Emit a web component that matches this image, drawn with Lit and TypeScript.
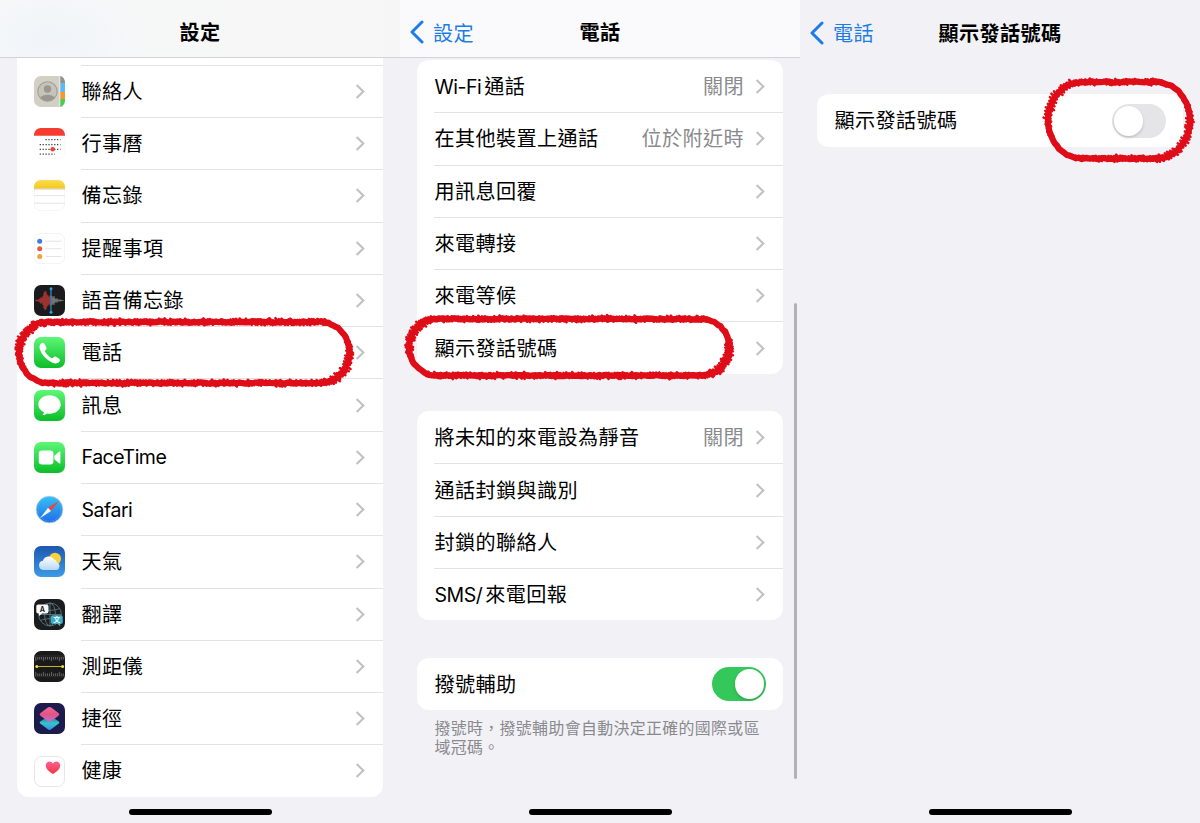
import { LitElement, html, svg, css, nothing } from "lit";
import { customElement, property } from "lit/decorators.js";

const FONT = css`Inter, "Noto Sans CJK TC", sans-serif`;

/* Splits a label into Latin and CJK runs so that each gets its own tracking. */
const runs = (text: string) =>
  text.split(/([\x21-\x7e]+)/).filter(Boolean).map((part) =>
    /^[\x21-\x7e]/.test(part)
      ? html`<span class="latin">${part}</span>`
      : html`<span class="han">${part}</span>`);

const textStyles = css`
  .latin { font-family: Inter, sans-serif; font-size: 19.5px; letter-spacing: -0.5px; }
  .han { font-family: "Noto Sans CJK TC", sans-serif; letter-spacing: 0.4px; }
  .latin + .han { margin-left: 3px; }
`;

const ticks = (y: number, dir: number) =>
  Array.from({ length: 15 }, (_, i) => svg`<path d="M${1.8 + i * 1.96} ${y}v${dir * (i % 4 === 0 ? 4.2 : 2.6)}"/>`);

const wave = (x0: number, heights: number[]) =>
  heights.map((h, i) => svg`<path d="M${x0 + i} ${15.5 - h}v${h * 2}"/>`);

const icons: Record<string, unknown> = {
  contacts: svg`
    <rect width="31" height="31" rx="7" fill="#d2d0c5"/>
    <path d="M26 0c3 .6 5 3.4 5 7v0h-5z" fill="#8e938f"/>
    <path d="M26 7h5v9h-5z" fill="#5fb8ee"/>
    <path d="M26 16h5v7h-5z" fill="#f29a2e"/>
    <path d="M26 23h5v1c0 3.600-2 6.400-5 7z" fill="#4bc95b"/>
    <path d="M25.800 0v31" stroke="#eceae2" stroke-width="1"/>
    <circle cx="13.500" cy="15.500" r="9.700" fill="#c6c4ba" stroke="#a09e96" stroke-width="1.100"/>
    <circle cx="13.500" cy="13" r="3.700" fill="#99978f"/>
    <path d="M6.300 21.200c2.800-3.400 11.600-3.400 14.400 0-3 4.900-11.400 4.900-14.400 0z" fill="#99978f"/>`,
  calendar: svg`
    <rect x=".25" y=".25" width="30.500" height="30.500" rx="7" fill="#fff" stroke="#f0f0f0" stroke-width=".5"/>
    <path d="M0 7.800C0 3 3 0 7 0h17c4 0 7 3 7 7.800z" fill="#f63b30"/>
    <g stroke="#333" stroke-width="1.200" stroke-dasharray="1.200 1.700">
      <path d="M11.500 11.600h15"/><path d="M5.700 16.600h20.800"/><path d="M5.700 21.300h20.800"/><path d="M5.700 26.200h15"/>
    </g>
    <circle cx="18.700" cy="21.200" r="2.300" fill="#e8403a"/>`,
  notes: svg`
    <rect x=".25" y=".25" width="30.500" height="30.500" rx="7" fill="#fff" stroke="#ececec" stroke-width=".6"/>
    <path d="M0 8.500V7c0-4 3-7 7-7h17c4 0 7 3 7 7v1.500z" fill="url(#notes)"/>
    <path d="M0 9h31" stroke="#cbb986" stroke-width=".8"/>
    <path d="M0 15.600h31M0 23.200h31" stroke="#dededf" stroke-width=".8"/>`,
  reminders: svg`
    <rect x=".25" y=".25" width="30.500" height="30.500" rx="7" fill="#fff" stroke="#e9e9ea" stroke-width=".6"/>
    <path d="M11.500 8.200h16M11.500 15.700h16M11.500 23.500h16" stroke="#dcdcde" stroke-width=".8"/>
    <circle cx="5.700" cy="8.200" r="2.500" fill="#3f7ae0"/>
    <circle cx="5.700" cy="15.700" r="2.500" fill="#df5b48"/>
    <circle cx="5.700" cy="23.500" r="2.500" fill="#f2a13e"/>`,
  memos: svg`
    <rect width="31" height="31" rx="7" fill="#1b1b1d"/>
    <g stroke="#c93c38" stroke-width="1">${wave(2, [0.6, 0.9, 0.7, 1.2, 2, 3.2, 2.4, 4.5, 7.5, 9.5, 8.8, 6, 5, 3.6, 5])}</g>
    <g stroke="#9a9a9c" stroke-width=".9">${wave(18, [4.5, 3, 4.4, 2.2, 1.4, 2.2, 1, 0.7, 1, 0.7, 0.5, 0.4])}</g>
    <path d="M17 3.500v24" stroke="#2f9fe0" stroke-width="1.100"/>
    <circle cx="17" cy="3.800" r="1.500" fill="#2f9fe0"/><circle cx="17" cy="27.200" r="1.500" fill="#2f9fe0"/>`,
  phone: svg`
    <rect width="31" height="31" rx="7" fill="url(#green)"/>
    <path d="M7.100 6.500c1.300-1 2.600-.9 3.500.4l1.600 3c.6 1.100.4 2-.4 2.800-.9.800-1 1.400-.5 2.300 1.400 2.400 3.500 4.500 5.900 5.900.9.500 1.500.3 2.200-.5.800-.9 1.700-1.100 2.800-.5l2.700 1.600c1.300.9 1.400 2.100.4 3.300-1.700 1.900-4.300 2.100-7.300.600C12.100 22.400 8.100 18.200 6.100 12.900 5.100 10.300 5.300 7.900 7.100 6.500z" fill="#fff"/>`,
  messages: svg`
    <rect width="31" height="31" rx="7" fill="url(#green)"/>
    <path d="M15.500 5.200c6.300 0 11.200 4.100 11.200 9.300s-4.900 9.300-11.200 9.300c-.9 0-1.700-.1-2.500-.2-1.300 1-2.900 1.700-4.700 1.700.9-.9 1.500-1.800 1.600-3-3.400-1.600-5.600-4.500-5.600-7.800 0-5.200 4.900-9.300 11.200-9.300z" fill="#fff"/>`,
  facetime: svg`
    <rect width="31" height="31" rx="7" fill="url(#green)"/>
    <rect x="4.800" y="8.600" width="14.600" height="13.800" rx="3.200" fill="#fff"/>
    <path d="M20.300 13.700l4.700-4c.7-.5 1.400-.3 1.400.6v10.400c0 .9-.7 1.100-1.400.6l-4.700-4z" fill="#fff"/>`,
  safari: svg`
    <circle cx="15.500" cy="15.500" r="13.400" fill="url(#blue)" stroke="#d4dde5" stroke-width=".7"/>
    <circle cx="15.500" cy="15.500" r="11.600" fill="none" stroke="#6fbdf5" stroke-width=".9" stroke-dasharray=".5 1.200"/>
    <path d="M25 6.800L14 13.800l3 3.200z" fill="#e8483f"/>
    <path d="M6 24.300L14 13.800l3 3.200z" fill="#f2f5f8"/>`,
  weather: svg`
    <rect width="31" height="31" rx="7" fill="url(#sky)"/>
    <circle cx="21" cy="12.700" r="6" fill="#fbd13e"/>
    <path d="M9.300 24A4.700 4.700 0 0 1 8.900 14.700 6.300 6.300 0 0 1 20 13.200 4.500 4.500 0 0 1 22.800 16.600 3.800 3.800 0 0 1 22 24z" fill="url(#cloud)"/>`,
  translate: svg`
    <rect width="31" height="31" rx="7" fill="#1a1c1e"/>
    <g fill="none" stroke="#5d767f" stroke-width=".9">
      <circle cx="16" cy="15.500" r="11.400"/><ellipse cx="16" cy="15.500" rx="5.400" ry="11.400"/>
      <path d="M16 4v23M4.600 15.500h22.800M6.500 9.500c5 2.400 14 2.400 19 0M6.500 21.500c5-2.400 14-2.400 19 0"/>
    </g>
    <path d="M4.300 5.400h8.200c1.200 0 2 .8 2 2v5c0 1.200-.8 2-2 2H8l-3 2.500v-2.500h-.7c-1.200 0-2-.8-2-2v-5c0-1.200.8-2 2-2z" fill="#fafafa"/>
    <path d="M18.800 16.300h8c1.200 0 2 .8 2 2V23c0 1.200-.8 2-2 2h-.6v2.500L23.500 25h-4.700c-1.200 0-2-.8-2-2v-4.700c0-1.200.8-2 2-2z" fill="#3cacc7"/>
    <text x="8.300" y="12.500" font-family="Inter, sans-serif" font-size="7" font-weight="700" fill="#222" text-anchor="middle">A</text>
    <text x="22.700" y="23.400" font-family="Noto Sans CJK TC, sans-serif" font-size="7" font-weight="700" fill="#fff" text-anchor="middle">文</text>`,
  measure: svg`
    <rect width="31" height="31" rx="7" fill="#1a1a1b"/>
    <path d="M0 5h31M0 25.700h31" stroke="#39393a" stroke-width=".6"/>
    <g stroke="#a3a3a3" stroke-width=".55">${ticks(6, 1)}${ticks(25, -1)}</g>
    <path d="M2.500 15.500h26" stroke="#c4b32c" stroke-width="1"/>
    <circle cx="2.800" cy="15.500" r="1.500" fill="#f5df35"/><circle cx="28.600" cy="15.500" r="1.500" fill="#f5df35"/>`,
  shortcuts: svg`
    <rect width="31" height="31" rx="7" fill="#1b1b4e"/>
    <path d="M14 13.400L6.500 18.200c-1.100.8-1.100 1.700 0 2.500l7.300 5.600c1.100.8 2.300.8 3.400 0l7.300-5.600c1.100-.8 1.100-1.700 0-2.500l-7-4.800z" fill="url(#teal)"/>
    <path d="M13.800 4.500L6.500 10c-1.100.8-1.100 1.800 0 2.700l7.300 5.500c1.100.8 2.300.8 3.400 0l7.300-5.500c1.100-.9 1.100-1.900 0-2.700l-7.300-5.500c-1.100-.8-2.300-.8-3.400 0z" fill="url(#pink)"/>`,
  health: svg`
    <rect x=".5" y=".5" width="30" height="30" rx="7" fill="#fff" stroke="#e6e6e8" stroke-width="1"/>
    <path d="M19 18.100c-4.300-2.700-7.200-5.300-7.200-8.500C11.800 7.200 13.400 5.500 15.500 5.500c1.500 0 2.800.8 3.500 2 .7-1.200 2-2 3.500-2 2.100 0 3.700 1.700 3.700 4.100 0 3.200-2.900 5.800-7.200 8.500z" fill="url(#heart)"/>`,
};

const grad = (id: string, ...stops: string[]) => svg`
  <linearGradient id=${id} x1="0" y1="0" x2="0" y2="1">
    ${stops.map((c, i) => svg`<stop offset=${i / (stops.length - 1)} stop-color=${c}/>`)}
  </linearGradient>`;

@customElement("app-icon")
class AppIcon extends LitElement {
  @property() name = "";
  static styles = css`:host, svg { display: block; width: 31px; height: 31px; }`;
  render() {
    return html`<svg viewBox="0 0 31 31">
      <defs>
        ${grad("green", "#5df777", "#0bbd29")}
        ${grad("blue", "#35c1f3", "#1f6ce8")}
        ${grad("sky", "#1d57b0", "#3c9be6")}
        ${grad("cloud", "#ffffff", "#b9d8f4")}
        ${grad("notes", "#f9dc4e", "#f5c822")}
        ${grad("teal", "#176c9c", "#35c6c4", "#3a8eee")}
        ${grad("pink", "#f06a9b", "#e4537f", "#b771d8")}
        ${grad("heart", "#fb5f94", "#f2363f")}
      </defs>
      ${icons[this.name]}
    </svg>`;
  }
}

@customElement("list-row")
class ListRow extends LitElement {
  @property() label = "";
  @property() value = "";
  @property() icon = "";
  @property() toggle = "";
  @property({ type: Boolean }) first = false;
  static styles = [textStyles, css`
    :host { display: flex; height: 52.29px; padding-left: 17px; box-sizing: border-box; }
    app-icon { align-self: center; margin: 1.200px 16px 0 0; }
    .body {
      flex: 1; display: flex; align-items: center; justify-content: space-between;
      border-top: 1px solid #e3e3e5; padding-right: 17px; box-sizing: border-box;
      font: 400 20.1px/30px ${FONT}; color: #000; white-space: nowrap;
    }
    .body.first { border-top-color: transparent; }
    .label { margin-left: .3px; }
    .end { display: flex; align-items: center; gap: 10.800px; color: #8a8a8e; }
    .chevron { display: block; width: 10px; height: 15px; margin-right: 1.200px; }
    .switch { width: 54.500px; height: 33.500px; border-radius: 17px; background: #e5e5e7; display: flex; padding: 2px; box-sizing: border-box; }
    .switch.on { background: #34c759; justify-content: flex-end; }
    .knob { width: 29.500px; height: 29.500px; border-radius: 50%; background: #fff; box-shadow: 0 1.500px 3px rgba(0,0,0,.18); }
  `];
  render() {
    return html`
      ${this.icon ? html`<app-icon name=${this.icon}></app-icon>` : nothing}
      <div class="body ${this.first ? "first" : ""}">
        <span class="label">${runs(this.label)}</span>
        <span class="end">
          ${this.value ? html`<span>${runs(this.value)}</span>` : nothing}
          ${this.toggle
            ? html`<span class="switch ${this.toggle}"><span class="knob"></span></span>`
            : html`<svg class="chevron" viewBox="0 0 10 15"><path d="M1.600 1.100L8.300 7.500 1.600 13.900" fill="none" stroke="#c1c1c4" stroke-width="2.100"/></svg>`}
        </span>
      </div>`;
  }
}

@customElement("nav-bar")
class NavBar extends LitElement {
  @property() heading = "";
  @property() back = "";
  static styles = [textStyles, css`
    :host {
      display: grid; grid-template-columns: 1fr auto 1fr; align-items: center;
      height: 57.500px; padding: 9px 9px 0; box-sizing: border-box;
      font: 400 20.1px/30px ${FONT};
    }
    .title { font-weight: 700; grid-column: 2; color: #000; }
    .back { display: flex; align-items: center; gap: 9px; color: #1c7ce8; }
    svg { display: block; width: 15px; height: 24px; margin-top: -1px; }
  `];
  render() {
    return html`
      ${this.back
        ? html`<span class="back"><svg viewBox="0 0 15 24"><path d="M13 2L3 12l10 10" fill="none" stroke="currentColor" stroke-width="3" stroke-linecap="round" stroke-linejoin="round"/></svg>${runs(this.back)}</span>`
        : nothing}
      <span class="title">${runs(this.heading)}</span>`;
  }
}

/* A crayon-like loop: a solid core with many short slanted dabs laid along it. */
@customElement("crayon-ring")
class CrayonRing extends LitElement {
  @property({ type: Number }) w = 0;
  @property({ type: Number }) h = 0;
  @property({ type: Number }) rx = 28;
  @property({ type: Number }) seed = 1;
  static styles = css`
    :host { display: block; pointer-events: none; }
    svg { display: block; overflow: visible; }
  `;
  render() {
    const { w, h, rx } = this;
    const ry = h / 2;
    let s = this.seed * 7919;
    const rnd = () => ((s = (s * 16807) % 2147483647) / 2147483647);
    const pts: number[][] = [];
    const arc = (cx: number, a0: number) => {
      for (let i = 0; i < 34; i++) {
        const a = a0 + (Math.PI * i) / 34;
        pts.push([cx + rx * Math.cos(a), ry + ry * Math.sin(a)]);
      }
    };
    for (let x = rx; x < w - rx; x += 3) pts.push([x, 0]);
    arc(w - rx, -Math.PI / 2);
    for (let x = w - rx; x > rx; x -= 3) pts.push([x, h]);
    arc(rx, Math.PI / 2);
    const core = pts.map((p, i) => `${i ? "L" : "M"}${p[0].toFixed(1)} ${(p[1] + rnd() * 1.4 - 0.7).toFixed(1)}`).join("") + "Z";
    const dabs = pts.map(([x, y]) => {
      const l = 3.3 + rnd() * 1.3, o = rnd() * 1.6 - 0.8;
      const a = 0.45 + rnd() * 0.4;
      const dx = Math.cos(a) * l, dy = Math.sin(a) * l;
      return `M${(x - dx + o).toFixed(1)} ${(y - dy + o).toFixed(1)}L${(x + dx + o).toFixed(1)} ${(y + dy + o).toFixed(1)}`;
    }).join("");
    return html`<svg width=${w} height=${h} fill="none" stroke="#de0d18" stroke-linejoin="round" stroke-linecap="round">
      <path d=${core} stroke-width="6.200"/>
      <path d=${dabs} stroke-width="2.500"/>
    </svg>`;
  }
}

const apps = [
  ["contacts", "聯絡人"], ["calendar", "行事曆"], ["notes", "備忘錄"], ["reminders", "提醒事項"],
  ["memos", "語音備忘錄"], ["phone", "電話"], ["messages", "訊息"], ["facetime", "FaceTime"],
  ["safari", "Safari"], ["weather", "天氣"], ["translate", "翻譯"], ["measure", "測距儀"],
  ["shortcuts", "捷徑"], ["health", "健康"],
];
const calls = [
  ["Wi-Fi通話", "關閉"], ["在其他裝置上通話", "位於附近時"], ["用訊息回覆", ""],
  ["來電轉接", ""], ["來電等候", ""], ["顯示發話號碼", ""],
];
const blocking = [["將未知的來電設為靜音", "關閉"], ["通話封鎖與識別", ""], ["封鎖的聯絡人", ""], ["SMS/來電回報", ""]];

@customElement("app-root")
class AppRoot extends LitElement {
  static styles = css`
    :host { display: flex; position: relative; width: 1200px; height: 823px; overflow: hidden; background: #f2f1f6; }
    .screen { width: 400px; height: 823px; display: flex; flex-direction: column; box-sizing: border-box; }
    .bar { border-bottom: 1px solid #d3d3d7; box-sizing: border-box; }
    .bar.tinted { background: radial-gradient(ellipse 100px 60px at 50px 38px, #f0f5fa, rgba(246,246,247,0)), linear-gradient(90deg, #f7f8f8, #f6f6f7); }
    .bar.light { background: #fafafc; }
    .card { margin: 0 17px 0 17.300px; background: #fff; border-radius: 12px; overflow: hidden; flex: none; }
    .card.cut { border-radius: 0 0 12px 12px; padding-top: 7.200px; }
    .card.top { margin-top: 2.500px; }
    .card.next { margin-top: 37.400px; }
    .card.lone { margin-top: 36.800px; }
    .note { margin: 9.600px 17px 0 34.500px; font: 400 15.900px/19px ${FONT}; letter-spacing: .38px; color: #89898e; white-space: nowrap; }
    .home { margin: auto auto 8px 129px; width: 143px; height: 6px; border-radius: 3px; background: #000; }
    .scroll { position: absolute; left: 793.500px; top: 303px; width: 3.500px; height: 475.500px; border-radius: 2px; background: #b1b1b6; }
    .ring { position: absolute; }
    .ring.a { left: 19px; top: 322px; }
    .ring.b { left: 408.500px; top: 318.500px; }
    .ring.c { left: 1048px; top: 82px; }
  `;
  render() {
    const rows = (list: string[][]) => list.map(([label, value], i) =>
      html`<list-row .label=${label} .value=${value} ?first=${i === 0}></list-row>`);
    return html`
      <section class="screen">
        <nav-bar class="bar tinted" heading="設定"></nav-bar>
        <div class="card cut">
          ${apps.map(([icon, label]) => html`<list-row .icon=${icon} .label=${label}></list-row>`)}
        </div>
        <div class="home"></div>
      </section>
      <section class="screen">
        <nav-bar class="bar light" heading="電話" back="設定"></nav-bar>
        <div class="card top">${rows(calls)}</div>
        <div class="card next">${rows(blocking)}</div>
        <div class="card next"><list-row first label="撥號輔助" toggle="on"></list-row></div>
        <div class="note">撥號時，撥號輔助會自動決定正確的國際或區<br>域冠碼。</div>
        <div class="home"></div>
      </section>
      <section class="screen">
        <nav-bar heading="顯示發話號碼" back="電話"></nav-bar>
        <div class="card lone"><list-row first label="顯示發話號碼" toggle="off"></list-row></div>
        <div class="home"></div>
      </section>
      <div class="scroll"></div>
      <crayon-ring class="ring a" w="330.500" h="61" rx="29" seed="3"></crayon-ring>
      <crayon-ring class="ring b" w="320.500" h="56.500" rx="28" seed="11"></crayon-ring>
      <crayon-ring class="ring c" w="142" h="76.500" rx="34" seed="23"></crayon-ring>`;
  }
}
